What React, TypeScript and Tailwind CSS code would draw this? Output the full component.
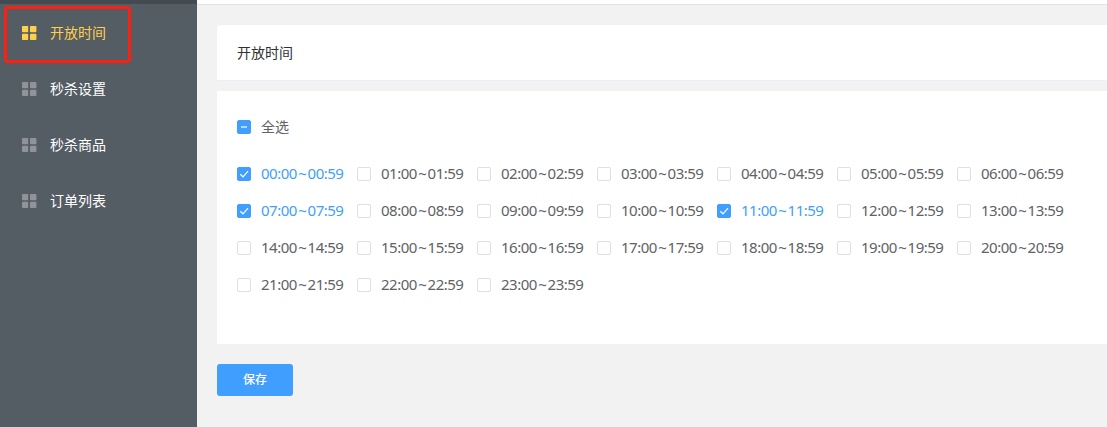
import { useState } from "react";
import clsx from "clsx";

const menus = ["开放时间", "秒杀设置", "秒杀商品", "订单列表"];

const hours = Array.from({ length: 24 }, (_, i) => String(i).padStart(2, "0"));

function GridIcon() {
  return (
    <svg width="15" height="14" viewBox="0 0 15 14" fill="currentColor" className="shrink-0">
      <rect x="0" y="0" width="6.2" height="6.2" rx="0.7" />
      <rect x="8" y="0" width="6.4" height="6.2" rx="0.7" />
      <rect x="0" y="7.8" width="6.2" height="6.2" rx="0.7" />
      <rect x="8" y="7.8" width="6.4" height="6.2" rx="0.7" />
    </svg>
  );
}

function CheckMark({ checked, partial }: { checked: boolean; partial?: boolean }) {
  return (
    <span
      className={clsx(
        "block size-3.5 shrink-0 rounded-[2px] border",
        checked || partial ? "border-[#409eff] bg-[#409eff]" : "border-[#dcdfe6] bg-white"
      )}
    >
      {partial && (
        <svg width="12" height="12" viewBox="0 0 12 12">
          <rect x="3" y="5" width="6" height="2" fill="#b3d8ff" />
        </svg>
      )}
      {checked && !partial && (
        <svg width="12" height="12" viewBox="0 0 12 12" fill="none" stroke="#fff" strokeWidth="1.2">
          <path d="M2.3 6.2 5 8.8 10 3.2" />
        </svg>
      )}
    </span>
  );
}

export default function App() {
  const [active, setActive] = useState(0);
  const [selected, setSelected] = useState<number[]>([0, 7, 11]);

  const all = selected.length === hours.length;
  const partial = selected.length > 0 && !all;

  const toggle = (i: number) =>
    setSelected((prev) => (prev.includes(i) ? prev.filter((n) => n !== i) : [...prev, i]));

  return (
    <div className="relative flex h-[427px] overflow-hidden bg-[#f2f2f2] font-['Noto_Sans','Noto_Sans_CJK_SC',sans-serif] text-sm">
      {/* Sidebar */}
      <aside className="w-[197px] shrink-0 border-t-4 border-[#434a50] bg-[#545c64] pt-px">
        {menus.map((name, i) => (
          <button
            key={name}
            onClick={() => setActive(i)}
            className="flex h-14 w-full items-center gap-[13px] pl-[22px]"
          >
            <span className={active === i ? "text-[#ffd04b]" : "text-[#909399]"}>
              <GridIcon />
            </span>
            <span className={active === i ? "text-[#ffd04b]" : "text-white"}>{name}</span>
          </button>
        ))}
      </aside>

      {/* Highlight */}
      <div className="pointer-events-none absolute top-[6px] left-1 h-[57px] w-[127px] rounded-[4px] border-[3px] border-[#ff1e10]" />

      {/* Content */}
      <div className="min-w-0 flex-1">
        <header className="h-[5px] border-b border-[#e2e2e2] bg-white" />
        <main className="pt-5 pl-5">
          <div className="flex h-14 items-center rounded-tl-[4px] border-b border-[#ebeef5] bg-white pl-5 text-[#303133]">
            开放时间
          </div>

          <div className="mt-2.5 h-[253px] bg-white pt-[17px] pl-5">
            <label
              className="flex h-[38px] w-fit items-center gap-2.5 text-[#606266]"
              onClick={() => setSelected(all ? [] : hours.map((_, i) => i))}
            >
              <CheckMark checked={all} partial={partial} />
              全选
            </label>
            <div className="mt-[9px] grid w-[840px] grid-cols-7">
              {hours.map((hour, i) => {
                const checked = selected.includes(i);
                return (
                  <label
                    key={hour}
                    onClick={() => toggle(i)}
                    className={clsx(
                      "flex h-[37px] items-center gap-2.5 text-[15px] tracking-[-0.5px]",
                      checked ? "text-[#409eff]" : "text-[#606266]"
                    )}
                  >
                    <CheckMark checked={checked} />
                    <span>
                      {hour}:00<span className="px-[1.3px]">~</span>{hour}:59
                    </span>
                  </label>
                );
              })}
            </div>
          </div>

          <button className="mt-5 h-8 w-[76px] rounded-[3px] bg-[#409eff] text-xs font-medium text-white">
            保存
          </button>
        </main>
      </div>
    </div>
  );
}
